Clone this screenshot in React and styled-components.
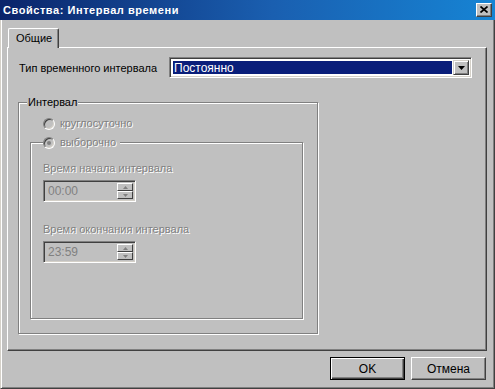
import React from 'react';
import styled, { createGlobalStyle } from 'styled-components';

const GlobalStyle = createGlobalStyle`
  html, body {
    margin: 0;
    padding: 0;
    background: #c0c0c0;
  }
  body {
    font-family: "Liberation Sans", Arial, sans-serif;
    font-size: 11px;
    color: #000;
  }
`;

function Triangle({ w = 7, h = 4, color = '#000', up = false }) {
  const d = up ? `M0 ${h} L${w / 2} 0 L${w} ${h} Z` : `M0 0 L${w} 0 L${w / 2} ${h} Z`;
  return (
    <svg width={w} height={h} viewBox={`0 0 ${w} ${h}`}>
      <path d={d} fill={color} />
    </svg>
  );
}

function Radio({ checked }) {
  return (
    <RadioCircle>
      {checked && <RadioDot />}
    </RadioCircle>
  );
}

function SpinBox({ value }) {
  return (
    <Spin>
      <SpinText>{value}</SpinText>
      <SpinButtons>
        <SpinButton><Triangle w={5} h={3} color="#808080" up /></SpinButton>
        <SpinButton><Triangle w={5} h={3} color="#808080" /></SpinButton>
      </SpinButtons>
    </Spin>
  );
}

export default function App() {
  return (
    <>
      <GlobalStyle />
      <Window>
        <TitleBar>
          <Title>Свойства: Интервал времени</Title>
          <CloseButton>
            <svg width="8" height="7" viewBox="0 0 8 7">
              <path d="M0.5 0.5 L7.5 6.5 M7.5 0.5 L0.5 6.5" stroke="#000" strokeWidth="1.7" />
            </svg>
          </CloseButton>
        </TitleBar>

        <Body>
          <TabStrip>
            <Tab>Общие</Tab>
          </TabStrip>

          <Panel>
            <Row>
              <FieldLabel>Тип временного интервала</FieldLabel>
              <Combo>
                <ComboValue>
                  <Highlight>Постоянно</Highlight>
                </ComboValue>
                <ComboButton><Triangle /></ComboButton>
              </Combo>
            </Row>

            <Group>
              <Legend>Интервал</Legend>
              <RadioRow $indent={13}>
                <Radio />
                <DisabledText>круглосуточно</DisabledText>
              </RadioRow>

              <InnerGroup>
                <InnerLegend>
                  <Radio checked />
                  <DisabledText>выборочно</DisabledText>
                </InnerLegend>

                <SpinLabel>Время начала интервала</SpinLabel>
                <SpinBox value="00:00" />

                <SpinLabel $top={21}>Время окончания интервала</SpinLabel>
                <SpinBox value="23:59" />
              </InnerGroup>
            </Group>
          </Panel>

          <ButtonRow>
            <PushButton $default>OK</PushButton>
            <PushButton>Отмена</PushButton>
          </ButtonRow>
        </Body>
      </Window>
    </>
  );
}

const Window = styled.div`
  width: 495px;
  height: 389px;
  box-sizing: border-box;
  background: #c0c0c0;
  border-left: 1px solid #d4d0c8;
  border-right: 1px solid #404040;
  border-bottom: 1px solid #404040;
  box-shadow: inset 1px 0 0 #fff, inset -1px -1px 0 #808080;
  display: flex;
  flex-direction: column;
`;

const TitleBar = styled.div`
  height: 20px;
  margin: 0 -1px;
  padding: 0 3px 0 3px;
  display: flex;
  align-items: center;
  justify-content: space-between;
  background: linear-gradient(to right, #0a246a 0%, #1a5fb0 55%, #1684d4 100%);
`;

const Title = styled.span`
  color: #fff;
  font-weight: bold;
  font-size: 11px;
  letter-spacing: 0.55px;
`;

const CloseButton = styled.div`
  width: 16px;
  height: 14px;
  box-sizing: border-box;
  background: #c0c0c0;
  border: 1px solid;
  border-color: #fff #404040 #404040 #fff;
  box-shadow: inset -1px -1px 0 #808080;
  display: flex;
  align-items: center;
  justify-content: center;
  padding-bottom: 1px;
`;

const Body = styled.div`
  padding: 8px 7px 0 6px;
  display: flex;
  flex-direction: column;
`;

const TabStrip = styled.div`
  display: flex;
  padding-left: 1px;
  position: relative;
  z-index: 1;
`;

const Tab = styled.div`
  width: 51px;
  height: 20px;
  box-sizing: border-box;
  margin-bottom: -1px;
  background: #c0c0c0;
  border-top: 1px solid #fff;
  border-left: 1px solid #fff;
  border-right: 1px solid #404040;
  border-top-left-radius: 2px;
  border-top-right-radius: 2px;
  box-shadow: inset -1px 0 0 #808080;
  display: flex;
  align-items: center;
  padding-left: 7px;
  padding-bottom: 1px;
`;

const Panel = styled.div`
  height: 304px;
  box-sizing: border-box;
  border: 1px solid;
  border-color: #fff #404040 #404040 #fff;
  box-shadow: inset -1px -1px 0 #808080;
  padding: 9px 14px 0 10px;
  display: flex;
  flex-direction: column;
  align-items: flex-start;
`;

const Row = styled.div`
  display: flex;
  align-items: center;
  width: 100%;
`;

const FieldLabel = styled.span`
  width: 150px;
  padding-left: 1px;
  white-space: nowrap;
`;

const Combo = styled.div`
  width: 303px;
  height: 21px;
  box-sizing: border-box;
  border: 1px solid;
  border-color: #808080 #fff #fff #808080;
  box-shadow: inset 1px 1px 0 #404040, inset -1px -1px 0 #d4d0c8;
  background: #fff;
  padding: 2px;
  display: flex;
`;

const ComboValue = styled.div`
  flex: 1;
  display: flex;
  padding: 1px;
`;

const Highlight = styled.div`
  flex: 1;
  background: #0a1e7a;
  color: #fff;
  display: flex;
  align-items: center;
  padding-left: 1px;
  font-size: 12px;
`;

const ComboButton = styled.div`
  width: 16px;
  box-sizing: border-box;
  background: #c0c0c0;
  border: 1px solid;
  border-color: #d4d0c8 #404040 #404040 #d4d0c8;
  box-shadow: inset 1px 1px 0 #fff, inset -1px -1px 0 #808080;
  display: flex;
  align-items: center;
  justify-content: center;
`;

const Group = styled.div`
  position: relative;
  margin-top: 24px;
  width: 300px;
  height: 232px;
  box-sizing: border-box;
  border: 1px solid #808080;
  box-shadow: inset 1px 1px 0 #fff, 1px 1px 0 #fff;
  padding: 14px 14px 0 11px;
`;

const Legend = styled.span`
  position: absolute;
  top: -7px;
  left: 8px;
  padding: 0 1px;
  line-height: 13px;
  background: #c0c0c0;
`;

const RadioRow = styled.div`
  display: flex;
  align-items: center;
  gap: 5px;
  height: 13px;
  margin-left: ${p => p.$indent || 0}px;
`;

const RadioCircle = styled.span`
  position: relative;
  width: 12px;
  height: 12px;
  box-sizing: border-box;
  border-radius: 50%;
  border: 1px solid;
  border-color: #808080 #fff #fff #808080;
  box-shadow: inset 1px 1px 0 #404040, inset -1px -1px 0 #d4d0c8;
  background: #c0c0c0;
  display: flex;
  align-items: center;
  justify-content: center;
`;

const RadioDot = styled.span`
  width: 4px;
  height: 4px;
  border-radius: 50%;
  background: #808080;
`;

const DisabledText = styled.span`
  color: #808080;
  text-shadow: 1px 1px 0 #fff;
  line-height: 13px;
  white-space: nowrap;
`;

const InnerGroup = styled.div`
  position: relative;
  margin-top: 12px;
  width: 273px;
  height: 177px;
  box-sizing: border-box;
  border: 1px solid #808080;
  box-shadow: inset 1px 1px 0 #fff, 1px 1px 0 #fff;
  padding: 19px 12px 0 12px;
  display: flex;
  flex-direction: column;
  align-items: flex-start;
`;

const InnerLegend = styled.div`
  position: absolute;
  top: -7px;
  left: 12px;
  display: flex;
  align-items: center;
  gap: 5px;
  height: 13px;
  padding-right: 4px;
  background: #c0c0c0;
`;

const SpinLabel = styled.span`
  margin-top: ${p => p.$top || 0}px;
  margin-bottom: 5px;
  line-height: 13px;
  color: #808080;
  text-shadow: 1px 1px 0 #fff;
  white-space: nowrap;
`;

const Spin = styled.div`
  width: 93px;
  height: 22px;
  box-sizing: border-box;
  border: 1px solid;
  border-color: #808080 #fff #fff #808080;
  box-shadow: inset 1px 1px 0 #404040, inset -1px -1px 0 #d4d0c8;
  background: #c0c0c0;
  padding: 2px 2px 2px 4px;
  display: flex;
  align-items: center;
`;

const SpinText = styled.span`
  flex: 1;
  color: #808080;
  font-size: 12px;
`;

const SpinButtons = styled.div`
  width: 16px;
  height: 100%;
  display: flex;
  flex-direction: column;
`;

const SpinButton = styled.div`
  flex: 1;
  box-sizing: border-box;
  background: #c0c0c0;
  border: 1px solid;
  border-color: #fff #404040 #404040 #fff;
  display: flex;
  align-items: center;
  justify-content: center;
`;

const ButtonRow = styled.div`
  display: flex;
  justify-content: flex-end;
  gap: 6px;
  margin-top: 6px;
  padding-right: 1px;
`;

const PushButton = styled.div`
  width: 75px;
  height: 23px;
  box-sizing: border-box;
  background: #c0c0c0;
  display: flex;
  align-items: center;
  justify-content: center;
  font-size: 12px;
  border: 1px solid;
  border-color: ${p => (p.$default ? '#000' : '#fff #404040 #404040 #fff')};
  box-shadow: ${p => (p.$default
    ? 'inset 1px 1px 0 #fff, inset -1px -1px 0 #404040, inset -2px -2px 0 #808080'
    : 'inset -1px -1px 0 #808080')};
`;
